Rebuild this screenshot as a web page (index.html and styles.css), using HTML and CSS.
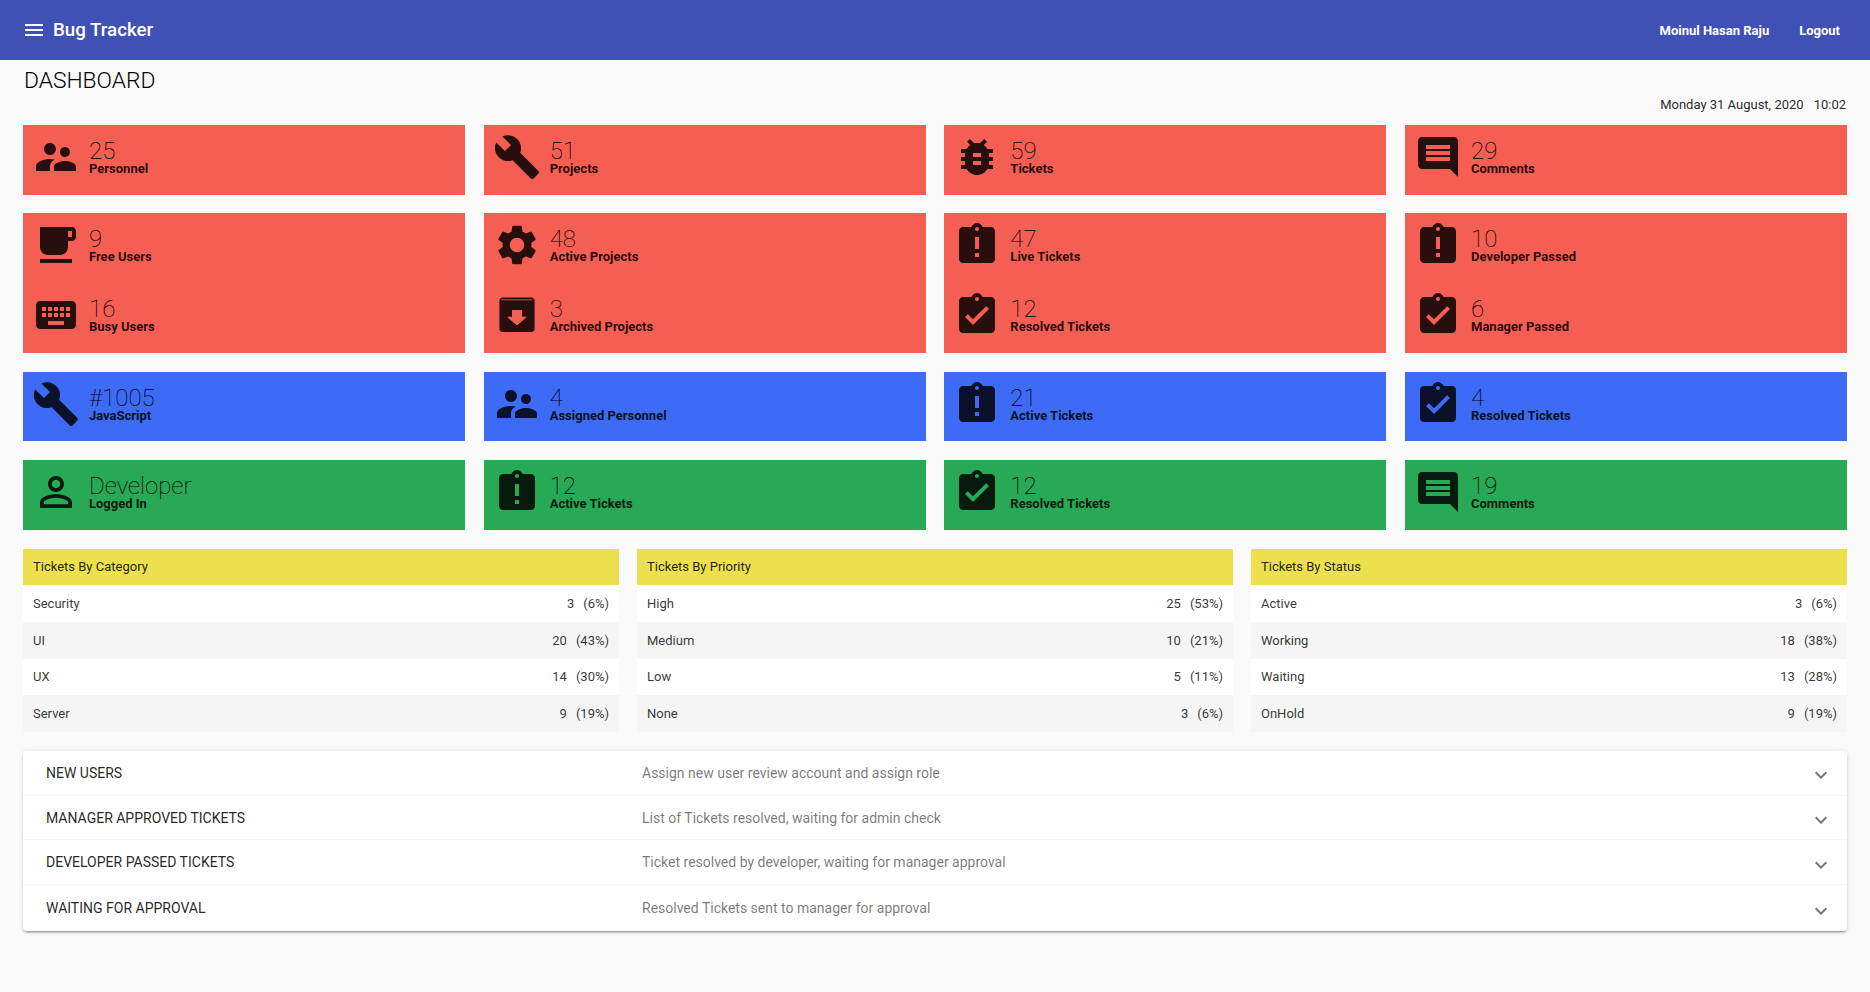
FILE: index.html
```html
<!DOCTYPE html>
<html lang="en">
<head>
<meta charset="utf-8">
<title>Bug Tracker</title>
<link rel="stylesheet" href="styles.css">
</head>
<body>
<svg class="defs" width="0" height="0" aria-hidden="true">
<symbol id="i-menu" viewBox="0 0 24 24"><path d="M3 18h18v-2H3v2zm0-5h18v-2H3v2zm0-7v2h18V6H3z"/></symbol>
<symbol id="i-people" viewBox="0 0 24 24"><path d="M16.5 12c1.38 0 2.49-1.12 2.49-2.5S17.88 7 16.5 7C15.12 7 14 8.12 14 9.5s1.12 2.5 2.5 2.5zM9 11c1.66 0 2.99-1.34 2.99-3S10.66 5 9 5C7.34 5 6 6.34 6 8s1.34 3 3 3zm7.5 3c-1.83 0-5.5.92-5.5 2.75V19h11v-2.25c0-1.83-3.67-2.75-5.5-2.75zM9 13c-2.33 0-7 1.17-7 3.5V19h7v-2.25c0-.85.33-2.34 2.37-3.47C10.5 13.1 9.66 13 9 13z"/></symbol>
<symbol id="i-build" viewBox="0 0 24 24"><path d="M22.7 19l-9.1-9.1c.9-2.3.4-5-1.5-6.9-2-2-5-2.4-7.4-1.3L9 6 6 9 1.6 4.7C.4 7.1.9 10.1 2.9 12.1c1.9 1.9 4.6 2.4 6.9 1.5l9.1 9.1c.4.4 1 .4 1.4 0l2.3-2.3c.5-.4.5-1.1.1-1.4z"/></symbol>
<symbol id="i-bug" viewBox="0 0 24 24"><path d="M20 8h-2.81c-.45-.78-1.07-1.45-1.82-1.96L17 4.41 15.59 3l-2.17 2.17C12.96 5.06 12.49 5 12 5c-.49 0-.96.06-1.41.17L8.41 3 7 4.41l1.62 1.63C7.88 6.55 7.26 7.22 6.81 8H4v2h2.09c-.05.33-.09.66-.09 1v1H4v2h2v1c0 .34.04.67.09 1H4v2h2.81c1.04 1.79 2.97 3 5.19 3s4.15-1.21 5.19-3H20v-2h-2.09c.05-.33.09-.66.09-1v-1h2v-2h-2v-1c0-.34-.04-.67-.09-1H20V8zm-6 8h-4v-2h4v2zm0-4h-4v-2h4v2z"/></symbol>
<symbol id="i-comment" viewBox="0 0 24 24"><path d="M21.99 4c0-1.1-.89-2-1.99-2H4c-1.1 0-2 .9-2 2v12c0 1.1.9 2 2 2h14l4 4-.01-18zM18 14H6v-2h12v2zm0-3H6V9h12v2zm0-3H6V6h12v2z"/></symbol>
<symbol id="i-cup" viewBox="0 0 24 24"><path d="M20 3H4v10c0 2.21 1.79 4 4 4h6c2.21 0 4-1.79 4-4v-3h2c1.11 0 2-.89 2-2V5c0-1.11-.89-2-2-2zm0 5h-2V5h2v3zM4 19h16v2H4z"/></symbol>
<symbol id="i-keyboard" viewBox="0 0 24 24"><path d="M20 5H4c-1.1 0-1.99.9-1.99 2L2 17c0 1.1.9 2 2 2h16c1.1 0 2-.9 2-2V7c0-1.1-.9-2-2-2zm-9 3h2v2h-2V8zm0 3h2v2h-2v-2zM8 8h2v2H8V8zm0 3h2v2H8v-2zm-1 2H5v-2h2v2zm0-3H5V8h2v2zm9 7H8v-2h8v2zm0-4h-2v-2h2v2zm0-3h-2V8h2v2zm3 3h-2v-2h2v2zm0-3h-2V8h2v2z"/></symbol>
<symbol id="i-gear" viewBox="0 0 24 24"><path d="M19.14 12.94c.04-.3.06-.61.06-.94 0-.32-.02-.64-.07-.94l2.03-1.58c.18-.14.23-.41.12-.61l-1.92-3.32c-.12-.22-.37-.29-.59-.22l-2.39.96c-.5-.38-1.03-.7-1.62-.94l-.36-2.54c-.04-.24-.24-.41-.48-.41h-3.84c-.24 0-.43.17-.47.41l-.36 2.54c-.59.24-1.13.57-1.62.94l-2.39-.96c-.22-.08-.47 0-.59.22L2.74 8.87c-.12.21-.08.47.12.61l2.03 1.58c-.05.3-.09.63-.09.94s.02.64.07.94l-2.03 1.58c-.18.14-.23.41-.12.61l1.92 3.32c.12.22.37.29.59.22l2.39-.96c.5.38 1.03.7 1.62.94l.36 2.54c.05.24.24.41.48.41h3.84c.24 0 .44-.17.47-.41l.36-2.54c.59-.24 1.13-.56 1.62-.94l2.39.96c.22.08.47 0 .59-.22l1.92-3.32c.12-.22.07-.47-.12-.61l-2.01-1.58zM12 15.6c-1.98 0-3.6-1.62-3.6-3.6s1.62-3.6 3.6-3.6 3.6 1.62 3.6 3.6-1.62 3.6-3.6 3.6z"/></symbol>
<symbol id="i-archive" viewBox="0 0 24 24"><path fill-rule="evenodd" d="M4.8 3.2h14.4c.9 0 1.6.7 1.6 1.6v14.1c0 .9-.7 1.6-1.6 1.6H4.8c-.9 0-1.6-.7-1.6-1.6V4.8c0-.9.7-1.6 1.6-1.6zM4.2 4.2v.4h15.6v-.4zM9.5 9.5h5v3.4H17L12 17.2 7 12.9h2.5z"/></symbol>
<symbol id="i-late" viewBox="0 0 24 24"><path d="M19 3h-4.18C14.4 1.84 13.3 1 12 1c-1.3 0-2.4.84-2.82 2H5c-1.1 0-2 .9-2 2v14c0 1.1.9 2 2 2h14c1.1 0 2-.9 2-2V5c0-1.1-.9-2-2-2zm-6 15h-2v-2h2v2zm0-4h-2V8h2v6zm-1-9c-.55 0-1-.45-1-1s.45-1 1-1 1 .45 1 1-.45 1-1 1z"/></symbol>
<symbol id="i-done" viewBox="0 0 24 24"><path d="M19 3h-4.18C14.4 1.84 13.3 1 12 1c-1.3 0-2.4.84-2.82 2H5c-1.1 0-2 .9-2 2v14c0 1.1.9 2 2 2h14c1.1 0 2-.9 2-2V5c0-1.1-.9-2-2-2zm-7 0c.55 0 1 .45 1 1s-.45 1-1 1-1-.45-1-1 .45-1 1-1zm-2 14l-4-4 1.41-1.41L10 14.17l6.59-6.59L18 9l-8 8z"/></symbol>
<symbol id="i-person" viewBox="0 0 24 24"><path d="M12 5.9c1.16 0 2.1.94 2.1 2.1s-.94 2.1-2.1 2.1S9.9 9.16 9.9 8s.94-2.1 2.1-2.1m0 9c2.97 0 6.1 1.46 6.1 2.1v1.1H5.9V17c0-.64 3.13-2.1 6.1-2.1M12 4C9.79 4 8 5.79 8 8s1.79 4 4 4 4-1.79 4-4-1.79-4-4-4zm0 9c-2.67 0-8 1.34-8 4v3h16v-3c0-2.66-5.33-4-8-4z"/></symbol>
<symbol id="i-expand" viewBox="0 0 24 24"><path d="M16.59 8.59L12 13.17 7.41 8.59 6 10l6 6 6-6z"/></symbol>
</svg>

<header class="toolbar">
  <svg class="menu-icon"><use href="#i-menu"/></svg>
  <span class="brand">Bug Tracker</span>
  <nav class="toolbar-links"><a>Moinul Hasan Raju</a><a>Logout</a></nav>
</header>

<main class="page">
  <div class="page-head">
    <h1 class="page-title">DASHBOARD</h1>
    <div class="date"><span>Monday 31 August, 2020</span><span>10:02</span></div>
  </div>

  <section class="cards">
    <div class="card red"><div class="stat"><svg class="ic"><use href="#i-people"/></svg><div class="txt"><div class="num">25</div><div class="lbl">Personnel</div></div></div></div>
    <div class="card red"><div class="stat"><svg class="ic"><use href="#i-build"/></svg><div class="txt"><div class="num">51</div><div class="lbl">Projects</div></div></div></div>
    <div class="card red"><div class="stat"><svg class="ic"><use href="#i-bug"/></svg><div class="txt"><div class="num">59</div><div class="lbl">Tickets</div></div></div></div>
    <div class="card red"><div class="stat"><svg class="ic"><use href="#i-comment"/></svg><div class="txt"><div class="num">29</div><div class="lbl">Comments</div></div></div></div>

    <div class="card red"><div class="stat"><svg class="ic"><use href="#i-cup"/></svg><div class="txt"><div class="num">9</div><div class="lbl">Free Users</div></div></div><div class="stat"><svg class="ic"><use href="#i-keyboard"/></svg><div class="txt"><div class="num">16</div><div class="lbl">Busy Users</div></div></div></div>
    <div class="card red"><div class="stat"><svg class="ic"><use href="#i-gear"/></svg><div class="txt"><div class="num">48</div><div class="lbl">Active Projects</div></div></div><div class="stat"><svg class="ic"><use href="#i-archive"/></svg><div class="txt"><div class="num">3</div><div class="lbl">Archived Projects</div></div></div></div>
    <div class="card red"><div class="stat"><svg class="ic"><use href="#i-late"/></svg><div class="txt"><div class="num">47</div><div class="lbl">Live Tickets</div></div></div><div class="stat"><svg class="ic"><use href="#i-done"/></svg><div class="txt"><div class="num">12</div><div class="lbl">Resolved Tickets</div></div></div></div>
    <div class="card red"><div class="stat"><svg class="ic"><use href="#i-late"/></svg><div class="txt"><div class="num">10</div><div class="lbl">Developer Passed</div></div></div><div class="stat"><svg class="ic"><use href="#i-done"/></svg><div class="txt"><div class="num">6</div><div class="lbl">Manager Passed</div></div></div></div>

    <div class="card blue"><div class="stat"><svg class="ic"><use href="#i-build"/></svg><div class="txt"><div class="num">#1005</div><div class="lbl">JavaScript</div></div></div></div>
    <div class="card blue"><div class="stat"><svg class="ic"><use href="#i-people"/></svg><div class="txt"><div class="num">4</div><div class="lbl">Assigned Personnel</div></div></div></div>
    <div class="card blue"><div class="stat"><svg class="ic"><use href="#i-late"/></svg><div class="txt"><div class="num">21</div><div class="lbl">Active Tickets</div></div></div></div>
    <div class="card blue"><div class="stat"><svg class="ic"><use href="#i-done"/></svg><div class="txt"><div class="num">4</div><div class="lbl">Resolved Tickets</div></div></div></div>

    <div class="card green"><div class="stat"><svg class="ic"><use href="#i-person"/></svg><div class="txt"><div class="num">Developer</div><div class="lbl">Logged In</div></div></div></div>
    <div class="card green"><div class="stat"><svg class="ic"><use href="#i-late"/></svg><div class="txt"><div class="num">12</div><div class="lbl">Active Tickets</div></div></div></div>
    <div class="card green"><div class="stat"><svg class="ic"><use href="#i-done"/></svg><div class="txt"><div class="num">12</div><div class="lbl">Resolved Tickets</div></div></div></div>
    <div class="card green"><div class="stat"><svg class="ic"><use href="#i-comment"/></svg><div class="txt"><div class="num">19</div><div class="lbl">Comments</div></div></div></div>
  </section>

  <section class="tables">
    <div class="tbl">
      <div class="tbl-head">Tickets By Category</div>
      <div class="tbl-row"><span>Security</span><span class="val"><span>3</span><span>(6%)</span></span></div>
      <div class="tbl-row"><span>UI</span><span class="val"><span>20</span><span>(43%)</span></span></div>
      <div class="tbl-row"><span>UX</span><span class="val"><span>14</span><span>(30%)</span></span></div>
      <div class="tbl-row"><span>Server</span><span class="val"><span>9</span><span>(19%)</span></span></div>
    </div>
    <div class="tbl">
      <div class="tbl-head">Tickets By Priority</div>
      <div class="tbl-row"><span>High</span><span class="val"><span>25</span><span>(53%)</span></span></div>
      <div class="tbl-row"><span>Medium</span><span class="val"><span>10</span><span>(21%)</span></span></div>
      <div class="tbl-row"><span>Low</span><span class="val"><span>5</span><span>(11%)</span></span></div>
      <div class="tbl-row"><span>None</span><span class="val"><span>3</span><span>(6%)</span></span></div>
    </div>
    <div class="tbl">
      <div class="tbl-head">Tickets By Status</div>
      <div class="tbl-row"><span>Active</span><span class="val"><span>3</span><span>(6%)</span></span></div>
      <div class="tbl-row"><span>Working</span><span class="val"><span>18</span><span>(38%)</span></span></div>
      <div class="tbl-row"><span>Waiting</span><span class="val"><span>13</span><span>(28%)</span></span></div>
      <div class="tbl-row"><span>OnHold</span><span class="val"><span>9</span><span>(19%)</span></span></div>
    </div>
  </section>

  <section class="accordion">
    <div class="panel"><span class="panel-title">NEW USERS</span><span class="panel-desc">Assign new user review account and assign role</span><svg class="chev"><use href="#i-expand"/></svg></div>
    <div class="panel"><span class="panel-title">MANAGER APPROVED TICKETS</span><span class="panel-desc">List of Tickets resolved, waiting for admin check</span><svg class="chev"><use href="#i-expand"/></svg></div>
    <div class="panel"><span class="panel-title">DEVELOPER PASSED TICKETS</span><span class="panel-desc">Ticket resolved by developer, waiting for manager approval</span><svg class="chev"><use href="#i-expand"/></svg></div>
    <div class="panel"><span class="panel-title">WAITING FOR APPROVAL</span><span class="panel-desc">Resolved Tickets sent to manager for approval</span><svg class="chev"><use href="#i-expand"/></svg></div>
  </section>
</main>
</body>
</html>
```
FILE: styles.css
```css
* { box-sizing: border-box; }
html, body { margin: 0; padding: 0; height: 100%; }
body {
  background: #fafafa;
  color: rgba(0, 0, 0, 0.87);
  font-family: Roboto, "Liberation Sans", sans-serif;
  font-size: 13px;
  overflow: hidden;
}
.defs { display: block; height: 0; width: 0; }

.toolbar {
  display: flex;
  align-items: center;
  height: 60px;
  padding: 0 30px 0 22px;
  background: #3f51b5;
  color: #fff;
}
.menu-icon { width: 24px; height: 24px; fill: #fff; margin-right: 7px; }
.brand { font-size: 18.72px; font-weight: 500; line-height: 58px; }
.toolbar-links { margin-left: auto; display: flex; gap: 30px; font-size: 13px; font-weight: 700; }

.page { padding: 0 23px; }
.page-head {
  display: flex;
  justify-content: space-between;
  align-items: flex-start;
  height: 65px;
}
.page-title {
  margin: 5px 0 0 1px;
  font-size: 22.8px;
  font-weight: 300;
  line-height: 32px;
  color: #000;
}
.date {
  align-self: flex-end;
  display: flex;
  gap: 10px;
  margin: 0 1px 12px 0;
  line-height: 16px;
}

.cards {
  display: grid;
  grid-template-columns: repeat(4, 1fr);
  grid-template-rows: 69.6px 140px 69.4px 70px;
  gap: 18.7px;
}
.card { display: flex; flex-direction: column; }
.red { background: #f55f53; }
.blue { background: #3d6bf5; }
.green { background: #28a956; }

.stat { flex: 1; display: flex; align-items: center; padding: 0 9px 6px; gap: 9px; }
.ic { width: 48px; height: 48px; flex: none; fill: rgba(0, 0, 0, 0.84); }
.txt { padding-top: 2px; }
.num { font-size: 24px; font-weight: 100; line-height: 22px; color: #000; -webkit-text-stroke: 0.1px #000; }
.lbl { font-size: 13px; font-weight: 700; line-height: 14px; }

.tables {
  display: grid;
  grid-template-columns: repeat(3, 1fr);
  gap: 18px;
  margin-top: 19px;
}
.tbl-head {
  height: 36px;
  padding: 0 10px 2px;
  display: flex;
  align-items: center;
  background: #ece04e;
}
.tbl-row {
  display: flex;
  justify-content: space-between;
  align-items: center;
  height: 36.75px;
  padding: 0 10px;
  background: #fff;
  color: rgba(0, 0, 0, 0.8);
}
.tbl-row:nth-child(odd) { background: #f5f5f5; }
.val { display: flex; gap: 9px; }

.accordion {
  margin-top: 19px;
  background: #fff;
  border-radius: 4px;
  box-shadow: 0 3px 1px -2px rgba(0, 0, 0, 0.2), 0 2px 2px 0 rgba(0, 0, 0, 0.14), 0 1px 5px 0 rgba(0, 0, 0, 0.12);
}
.panel {
  display: flex;
  align-items: center;
  height: 44.7px;
  padding: 0 14px 0 23px;
  font-size: 14px;
  border-bottom: 1px solid #f5f5f5;
}
.panel:last-child { border-bottom: 0; height: 46px; }
.panel-title { width: 596px; font-weight: 400; }
.panel-desc { flex: 1; color: rgba(0, 0, 0, 0.54); }
.chev { width: 24px; height: 24px; fill: rgba(0, 0, 0, 0.54); margin-top: 5px; }
```
